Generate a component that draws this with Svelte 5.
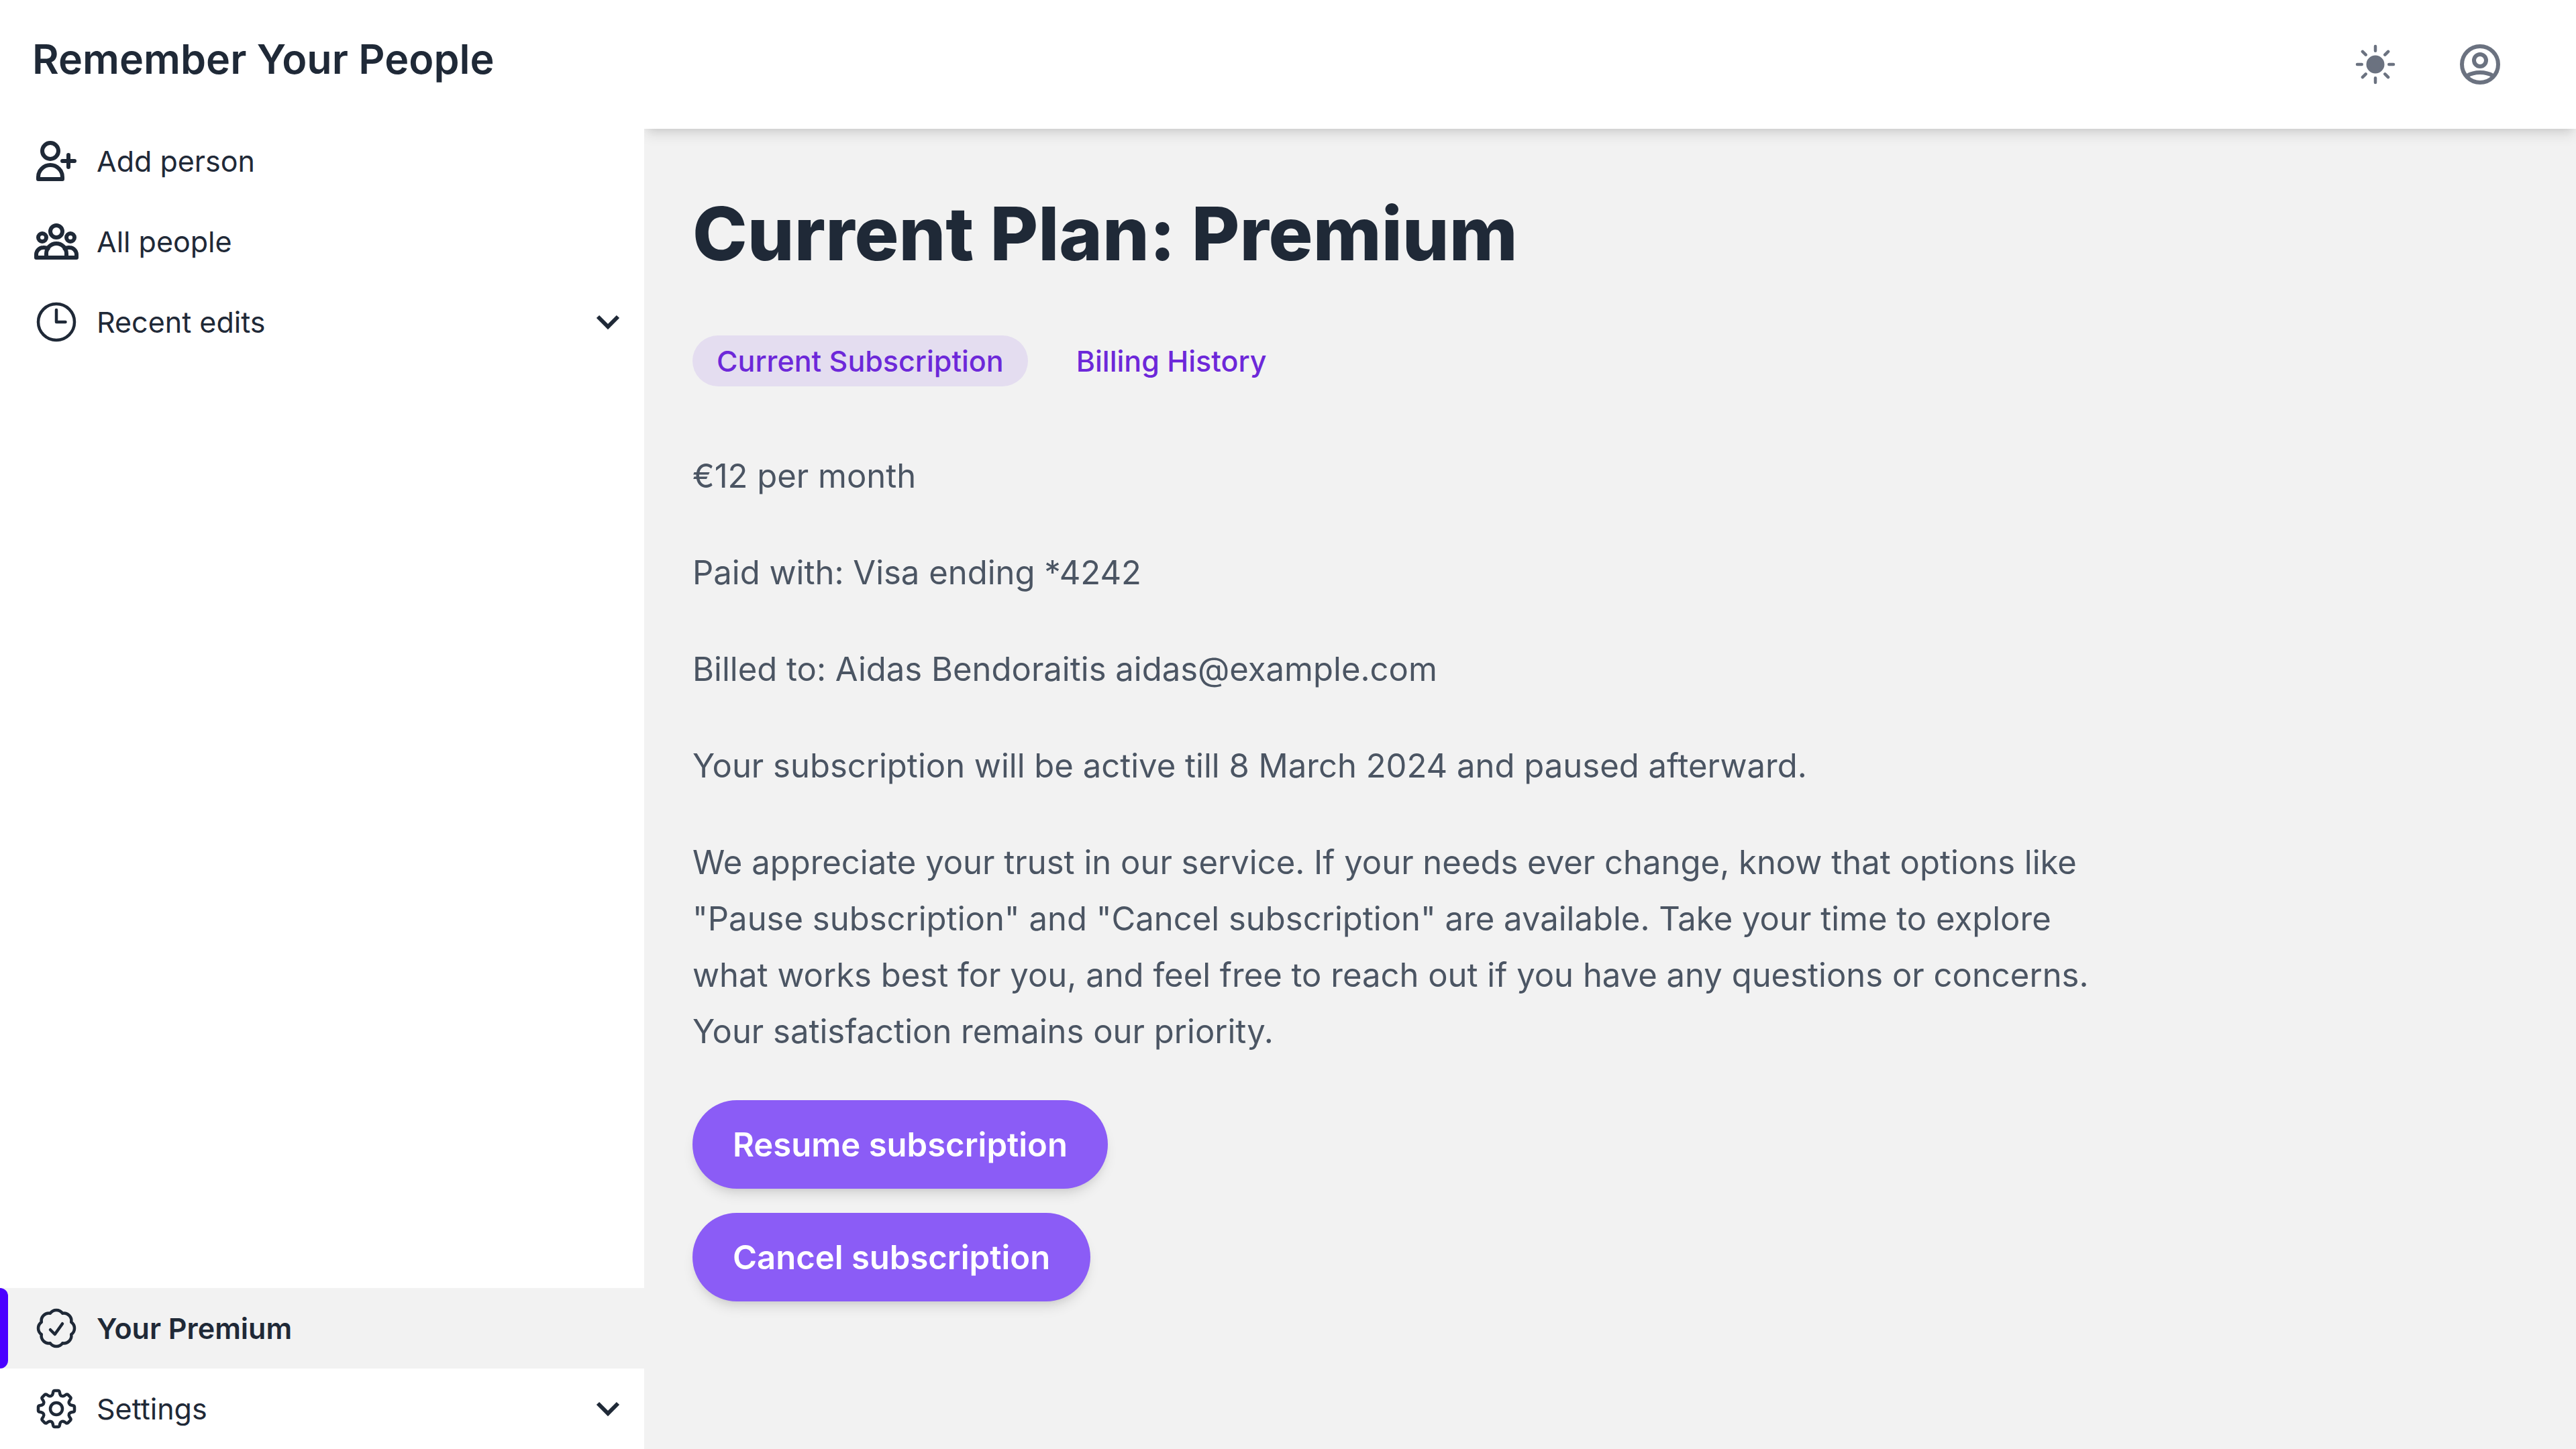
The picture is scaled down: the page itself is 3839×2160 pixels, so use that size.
<script>
  const primary = [
    { label: 'Add person', icon: 'add' },
    { label: 'All people', icon: 'people' },
    { label: 'Recent edits', icon: 'clock', expands: true }
  ];
  const secondary = [
    { label: 'Your Premium', icon: 'badge', active: true },
    { label: 'Settings', icon: 'gear', expands: true }
  ];

  // Outline of an eight-toothed gear centred on 12,12
  function gearPath() {
    const at = (k, x, y) => {
      const a = (k * Math.PI) / 4;
      const px = 12 + x * Math.cos(a) - y * Math.sin(a);
      const py = 12 + x * Math.sin(a) + y * Math.cos(a);
      return `${px.toFixed(3)} ${py.toFixed(3)}`;
    };
    let d = `M${at(0, -0.8, -9)}`;
    for (let k = 0; k < 8; k++) {
      d += `L${at(k, 0.8, -9)}Q${at(k, 1.45, -9)} ${at(k, 1.6, -8.3)}L${at(k, 1.75, -7.5)}`;
      d += `C${at(k, 2, -6.3)} ${at(k + 1, -2, -6.3)} ${at(k + 1, -1.75, -7.5)}`;
      d += `L${at(k + 1, -1.6, -8.3)}Q${at(k + 1, -1.45, -9)} ${at(k + 1, -0.8, -9)}`;
    }
    return d + 'Z';
  }
  const gear = gearPath();
</script>

{#snippet glyph(name)}
  <svg class="icon" viewBox="0 0 24 24" aria-hidden="true">
    {#if name === 'add'}
      <g stroke-width="2">
        <circle cx="9" cy="7" r="4" />
        <path d="M3 21v-1a6 6 0 0 1 12 0v1ZM15 12h6M18 9v6" />
      </g>
    {:else if name === 'people'}
      <g stroke-width="2">
        <circle cx="12" cy="7" r="3" />
        <circle cx="5" cy="10" r="2" />
        <circle cx="19" cy="10" r="2" />
        <path d="M7.9 15.5A4.5 4.5 0 0 0 5.5 15A3.5 3.5 0 0 0 2 18.5V20h20v-1.5A3.5 3.5 0 0 0 18.5 15a4.5 4.5 0 0 0-2.4.5M7 20v-2a5 5 0 0 1 10 0v2" />
      </g>
    {:else if name === 'clock'}
      <path d="M12 6v6h4.5M21 12a9 9 0 1 1-18 0 9 9 0 0 1 18 0Z" />
    {:else if name === 'badge'}
      <path d="M9 12.75 11.25 15 15 9.75M21 12c0 1.268-.63 2.39-1.593 3.068a3.745 3.745 0 0 1-1.043 3.296 3.745 3.745 0 0 1-3.296 1.043A3.745 3.745 0 0 1 12 21c-1.268 0-2.39-.63-3.068-1.593a3.746 3.746 0 0 1-3.296-1.043 3.745 3.745 0 0 1-1.043-3.296A3.745 3.745 0 0 1 3 12c0-1.268.63-2.39 1.593-3.068a3.745 3.745 0 0 1 1.043-3.296 3.746 3.746 0 0 1 3.296-1.043A3.746 3.746 0 0 1 12 3c1.268 0 2.39.63 3.068 1.593a3.746 3.746 0 0 1 3.296 1.043 3.746 3.746 0 0 1 1.043 3.296A3.745 3.745 0 0 1 21 12Z" />
    {:else if name === 'gear'}
      <path d={gear} />
      <circle cx="12" cy="12" r="3" />
    {:else if name === 'sun'}
      <circle cx="12" cy="12" r="3.75" fill="currentColor" />
      <path d="M12 3v2.25m6.364.386-1.591 1.591M21 12h-2.25m-.386 6.364-1.591-1.591M12 18.75V21m-4.773-4.227-1.591 1.591M5.25 12H3m4.227-4.773L5.636 5.636" />
    {:else if name === 'account'}
      <g stroke-width="2">
        <circle cx="12" cy="12" r="9" />
        <circle cx="12" cy="10" r="3" />
        <path stroke-linecap="butt" d="M5.5 17.7C7.3 16.6 9.5 16 12 16s4.7.6 6.5 1.7" />
      </g>
    {/if}
  </svg>
{/snippet}

{#snippet inner(item)}
  {@render glyph(item.icon)}
  <span class="label">{item.label}</span>
  {#if item.expands}
    <svg class="chevron" viewBox="0 0 36 24" aria-hidden="true"><path d="M3 4 18 19 33 4" /></svg>
  {/if}
{/snippet}

{#snippet menu(items)}
  <ul class="menu">
    {#each items as item}
      <li>
        {#if item.expands}
          <button type="button" class="entry" aria-expanded="false">{@render inner(item)}</button>
        {:else}
          <a href="#top" class="entry" class:active={item.active} aria-current={item.active ? 'page' : undefined}>{@render inner(item)}</a>
        {/if}
      </li>
    {/each}
  </ul>
{/snippet}

<div class="app">
  <aside class="sidebar">
    <div class="brand">Remember Your People</div>
    <nav class="nav" aria-label="Main">
      {@render menu(primary)}
      {@render menu(secondary)}
    </nav>
  </aside>

  <div class="page">
    <header class="topbar">
      <button type="button" class="tool" aria-label="Switch theme">{@render glyph('sun')}</button>
      <button type="button" class="tool" aria-label="Account">{@render glyph('account')}</button>
    </header>

    <main class="content">
      <h1>Current Plan: Premium</h1>
      <nav class="tabs" aria-label="Subscription">
        <a href="#subscription" class="tab selected" aria-current="page">Current Subscription</a>
        <a href="#billing" class="tab">Billing History</a>
      </nav>
      <div class="prose">
        <p>€12 per month</p>
        <p>Paid with: Visa ending *4242</p>
        <p>Billed to: Aidas Bendoraitis aidas@example.com</p>
        <p>Your subscription will be active till 8 March 2024 and paused afterward.</p>
        <p>We appreciate your trust in our service. If your needs ever change, know that options like "Pause subscription" and "Cancel subscription" are available. Take your time to explore what works best for you, and feel free to reach out if you have any questions or concerns. Your satisfaction remains our priority.</p>
      </div>
      <div class="actions">
        <button type="button" class="action">Resume subscription</button>
        <button type="button" class="action">Cancel subscription</button>
      </div>
    </main>
  </div>
</div>

<style>
  :global(body) {
    background: #f2f2f2;
  }
  .app {
    display: grid;
    grid-template-columns: 960px 1fr;
    min-height: 100vh;
    font-family: Inter, 'Noto Sans', sans-serif;
    color: #1f2937;
  }
  a {
    color: inherit;
    text-decoration: none;
  }
  button {
    border: 0;
    margin: 0;
    background: none;
    color: inherit;
    font-family: inherit;
    cursor: pointer;
  }
  .icon {
    width: 72px;
    height: 72px;
    flex: none;
    display: block;
    fill: none;
    stroke: currentColor;
    stroke-width: 1.5;
    stroke-linecap: round;
    stroke-linejoin: round;
  }

  .sidebar {
    display: flex;
    flex-direction: column;
    background: #fff;
    position: relative;
    z-index: 1;
  }
  .brand {
    display: flex;
    align-items: center;
    box-sizing: border-box;
    height: 180px;
    padding: 0 48px 4px;
    font-size: 61px;
    font-weight: 600;
  }
  .nav {
    flex: 1;
    display: flex;
    flex-direction: column;
    justify-content: space-between;
  }
  .menu {
    list-style: none;
    margin: 0;
    padding: 0;
  }
  .entry {
    display: flex;
    align-items: center;
    gap: 24px;
    box-sizing: border-box;
    width: 100%;
    height: 120px;
    padding: 0 36px 0 48px;
    font-size: 43px;
    font-weight: 400;
    text-align: left;
  }
  .entry.active {
    position: relative;
    background: #f2f2f2;
    font-weight: 600;
  }
  .entry.active::before {
    content: '';
    position: absolute;
    inset: 0 auto 0 0;
    width: 12px;
    border-radius: 0 12px 12px 0;
    background: #4a00ff;
  }
  .label {
    flex: 1;
  }
  .chevron {
    width: 36px;
    height: 24px;
    fill: none;
    stroke: currentColor;
    stroke-width: 6;
  }

  .page {
    display: flex;
    flex-direction: column;
    min-width: 0;
    background: #f2f2f2;
  }
  .topbar {
    display: flex;
    align-items: center;
    justify-content: flex-end;
    gap: 12px;
    height: 192px;
    padding-right: 71px;
    background: #fff;
    box-shadow: 0 12px 18px -3px rgb(0 0 0 / 0.1), 0 6px 12px -6px rgb(0 0 0 / 0.1);
    color: #6b7280;
  }
  .tool {
    display: grid;
    place-items: center;
    width: 144px;
    height: 144px;
    padding: 0;
  }
  .content {
    padding: 96px 72px;
  }
  h1 {
    margin: 0 0 92px;
    font-size: 110px;
    line-height: 120px;
    font-weight: 800;
  }
  .tabs {
    display: flex;
    gap: 36px;
    margin-bottom: 92px;
  }
  .tab {
    padding: 8px 36px;
    border-radius: 38px;
    font-size: 43px;
    line-height: 60px;
    font-weight: 500;
    color: #6d28d9;
  }
  .tab.selected {
    background: #e4ddf0;
  }
  .prose {
    max-width: 2100px;
    color: #4b5563;
  }
  .prose p {
    margin: 0 0 60px;
    font-size: 49px;
    line-height: 84px;
  }
  .actions {
    display: flex;
    flex-direction: column;
    align-items: flex-start;
    gap: 36px;
  }
  .action {
    height: 132px;
    padding: 0 60px;
    border-radius: 66px;
    background: #8b5cf6;
    color: #fff;
    font-size: 49px;
    font-weight: 600;
    box-shadow: 0 12px 18px -3px rgb(0 0 0 / 0.1), 0 6px 12px -6px rgb(0 0 0 / 0.1);
  }
</style>
